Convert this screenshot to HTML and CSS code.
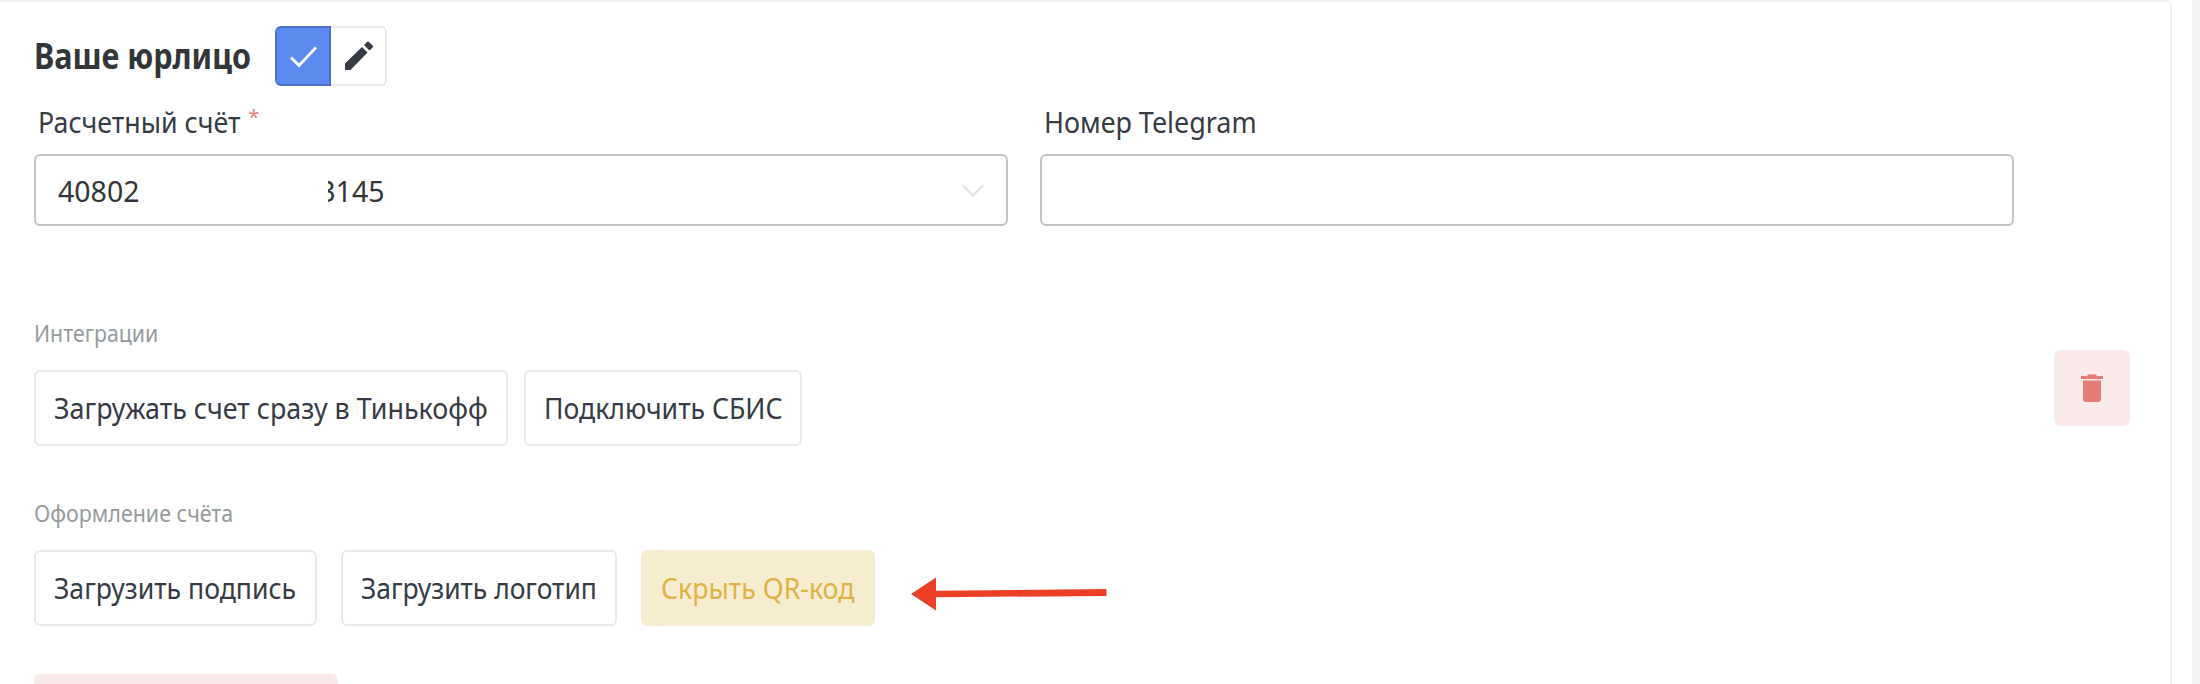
FILE: index.html
```html
<!DOCTYPE html>
<html lang="ru">
<head>
<meta charset="utf-8">
<title>Ваше юрлицо</title>
<link rel="stylesheet" href="styles.css">
</head>
<body>
<main class="card">
  <div class="content">
    <header class="head">
      <h1 class="title"><span class="fit fit-title">Ваше юрлицо</span></h1>
      <div class="group">
        <button class="tool tool-active" aria-label="Сохранить"><svg width="56" height="60" viewBox="0 0 56 60"><path d="M16 31.500l8 8 17-18" fill="none" stroke="#fff" stroke-width="2.800"/></svg></button>
        <button class="tool" aria-label="Изменить"><svg width="56" height="60" viewBox="0 0 56 60"><path fill="#363b45" d="M14 44v-6.500L31 21l5.500 5.500L19.500 44zM33 19l3-3q1-.8 2 0l3.600 3.600q.9 1 0 2L38.500 24.500z"/></svg></button>
      </div>
    </header>
    <div class="fields">
      <div class="field">
        <label class="label"><span class="fit fit-account">Расчетный счёт</span><span class="req">*</span></label>
        <div class="input"><span class="value-start"><span class="fit fit-num">40802</span></span><span class="value-end"><span class="fit fit-num">3145</span></span>
          <svg class="chevron" width="22" height="14" viewBox="0 0 22 14"><path d="M1.500 2L11 11.500 20.500 2" fill="none" stroke="#dfe0e6" stroke-width="2" stroke-linecap="round"/></svg>
        </div>
      </div>
      <div class="field">
        <label class="label"><span class="fit fit-telegram">Номер Telegram</span></label>
        <div class="input"></div>
      </div>
    </div>
    <section class="section integrations">
      <h2 class="caption"><span class="fit fit-integr">Интеграции</span></h2>
      <div class="row row-tight">
        <button class="btn w-tinkoff"><span class="fit fit-tinkoff">Загружать счет сразу в Тинькофф</span></button>
        <button class="btn w-sbis"><span class="fit fit-sbis">Подключить СБИС</span></button>
      </div>
    </section>
    <section class="section design">
      <h2 class="caption"><span class="fit fit-design">Оформление счёта</span></h2>
      <div class="row">
        <button class="btn w-sign"><span class="fit fit-sign">Загрузить подпись</span></button>
        <button class="btn w-logo"><span class="fit fit-logo">Загрузить логотип</span></button>
        <button class="btn btn-warn w-qr"><span class="fit fit-qr">Скрыть QR-код</span></button>
        <svg class="arrow" width="196" height="34" viewBox="0 0 196 34"><path fill="#ec4026" d="M0 17L25 .5V13.700L195.500 12v7L25 20.200V33.500z"/></svg>
      </div>
    </section>
    <div class="danger"></div>
  </div>
  <aside class="side">
    <button class="remove" aria-label="Удалить"><svg width="76" height="76" viewBox="0 0 76 76"><path fill="#e47b78" d="M27 26h6l1-1.500h8L43 26h6v3H27zM29 30.500h18V49q0 3-3 3H32q-3 0-3-3z"/></svg></button>
  </aside>
</main>
<div class="gutter"></div>
</body>
</html>
```

FILE: styles.css
```css
* { box-sizing: border-box; }
body { margin: 0; height: 684px; display: flex; overflow: hidden; background: #fff; color: #363b45; font-family: "Noto Sans", "Open Sans", sans-serif; font-size: 29.500px; }
.card { width: 2172px; height: 684px; display: flex; justify-content: space-between; border: solid #efeff5; border-width: 2px 2px 0 0; border-top-right-radius: 6px; padding: 24px 40px 0 34px; }
.gutter { width: 8px; height: 684px; margin-left: 20px; background: #f4f4f5; }
.content { width: 1980px; }
.head { display: flex; height: 60px; }
.title { width: 241px; margin: 0; font-size: 35px; font-weight: 700; line-height: 60px; color: #333639; }
.fit { display: inline-block; white-space: nowrap; transform-origin: 0 50%; }
.group { display: flex; }
.tool { width: 56px; height: 60px; padding: 0; border: 2px solid #e9e9ea; border-left: 0; border-radius: 0 6px 6px 0; background: #fff; }
.tool svg { display: block; margin: -2px 0 0; }
.tool-active { border: 2px solid #4a73d2; border-radius: 6px 0 0 6px; background: #5b89ee; }
.tool-active svg { margin-left: -2px; }
.fields { display: flex; gap: 32px; }
.field { width: 974px; }
.label { display: flex; height: 68px; padding-left: 4px; line-height: 71px; }
.req { margin-left: -13px; color: #e47b78; font-size: 20px; line-height: 62px; }
.input { display: flex; align-items: center; height: 72px; border: 2px solid #c4c4c5; border-radius: 6px; padding: 1px 22px 0 22px; color: #333639; }
.value-start { width: 270px; }
.value-end { display: flex; justify-content: flex-end; width: 56px; overflow: hidden; }
.value-end .fit { transform-origin: 100% 50%; }
.chevron { margin-left: auto; }
.section { height: 180px; }
.integrations { margin-top: 84px; }
.caption { height: 60px; margin: 0; font-size: 24px; font-weight: 400; line-height: 45px; color: #959b9c; }
.row { display: flex; align-items: flex-start; gap: 24px; }
.row-tight { gap: 16px; }
.btn { height: 76px; padding: 0 0 1px 18px; border: 2px solid #e9e9ea; border-radius: 6px; background: #fff; color: #363b45; font: inherit; text-align: left; }
.btn-warn { border-color: #f6edd1; background: #f6edd1; color: #deb344; }
.w-tinkoff { width: 474px; }
.w-sbis { width: 278px; }
.w-sign { width: 283px; }
.w-logo { width: 276px; }
.w-qr { width: 234px; }
.arrow { margin: 47px 0 0 12px; }
.row .arrow { margin-top: 47px; }
.danger { width: 304px; height: 10px; margin-top: 4px; border-radius: 6px 6px 0 0; background: #fae9e9; }
.design .arrow { margin-top: 47px; }
.side { padding-top: 324px; }
.remove { width: 76px; height: 76px; padding: 0; border: 0; border-radius: 6px; background: #fae9e9; }
.remove svg { display: block; }
.design .row .arrow { margin-top: 27px; }
.fit-title { transform: scaleX(.872); }
.fit-account { transform: scaleX(.907); }
.fit-telegram { transform: scaleX(.912); }
.fit-num { transform: scaleX(.966); }
.fit-integr { transform: scaleX(.888); }
.fit-design { transform: scaleX(.893); }
.fit-tinkoff { transform: scaleX(.909); }
.fit-sbis { transform: scaleX(.902); }
.fit-sign { transform: scaleX(.902); }
.fit-logo { transform: scaleX(.896); }
.fit-qr { transform: scaleX(.906); }
```
